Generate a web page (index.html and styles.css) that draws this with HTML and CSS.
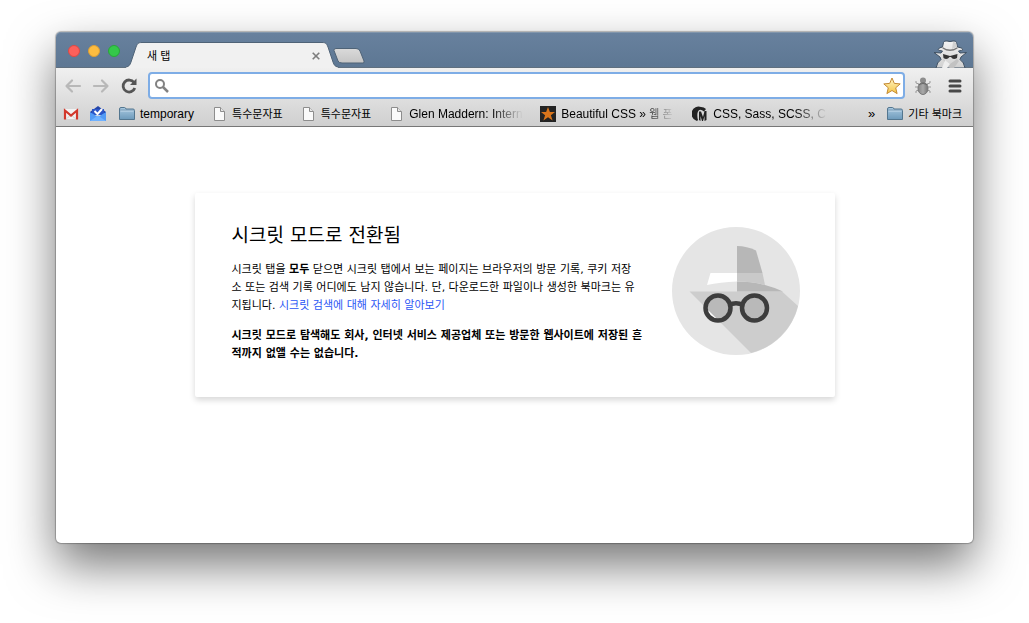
FILE: index.html
```html
<!DOCTYPE html>
<html lang="ko">
<head>
<meta charset="utf-8">
<title>새 탭</title>
<link rel="stylesheet" href="styles.css">
</head>
<body>
<svg class="defs" aria-hidden="true">
  <defs>
    <linearGradient id="folderFill" x1="0" y1="0" x2="0" y2="1"><stop offset="0" stop-color="#a9c9e0"/><stop offset="1" stop-color="#6d9abb"/></linearGradient>
    <linearGradient id="starFill" x1="0" y1="0" x2="0" y2="1"><stop offset="0" stop-color="#fff6c8"/><stop offset="1" stop-color="#f6c544"/></linearGradient>
    <linearGradient id="spyFill" x1="0" y1="0" x2="0" y2="1"><stop offset="0" stop-color="#f2f2f2"/><stop offset="1" stop-color="#d0d0d0"/></linearGradient>
    <linearGradient id="bugFill" x1="0" y1="0" x2="1" y2="0"><stop offset="0" stop-color="#858585"/><stop offset=".5" stop-color="#a9a9a9"/><stop offset="1" stop-color="#747474"/></linearGradient>
    <linearGradient id="newTabFill" x1="0" y1="0" x2="0" y2="1"><stop offset="0" stop-color="#dadada"/><stop offset="1" stop-color="#c5c5c5"/></linearGradient>
    <symbol id="folder" viewBox="0 0 16 16">
      <path d="M.5 13.500V3Q.5 1.500 2 1.500H5.500Q6.500 1.500 7 3H14Q15.500 3 15.500 4.500V13.500Z" fill="url(#folderFill)" stroke="#53768f"/>
      <path d="M1.500 5H14.500" stroke="#c6dcec"/><path d="M1 4H15" stroke="#6487a0" stroke-opacity=".6"/>
    </symbol>
    <symbol id="file" viewBox="0 0 16 16">
      <path d="M3.500 1.500H9.500L13.500 5.500V14.500H3.500Z" fill="#fafafa" stroke="#8d8d8d"/>
      <path d="M9.500 1.500V5.500H13.500" fill="#e6e6e6" stroke="#8d8d8d"/>
    </symbol>
  </defs>
</svg>

<div class="window">
  <header class="titlebar">
    <div class="lights">
      <button class="light light-close" aria-label="닫기"></button>
      <button class="light light-min" aria-label="최소화"></button>
      <button class="light light-max" aria-label="확대"></button>
    </div>
    <div class="tab">
      <svg class="slope" viewBox="0 0 16 26"><path d="M0 26V25C3 24.500 4 23 5 20L10 5C11.500 1.500 12 .5 16 .5V26Z" fill="#f1f1f1"/><path d="M0 25C3 24.500 4 23 5 20L10 5C11.500 1.500 12 .5 16 .5" fill="none" stroke="#4f6377"/></svg>
      <div class="tab-body">
        <span class="tab-title">새 탭</span>
        <button class="tab-close" aria-label="탭 닫기"><svg viewBox="0 0 8 8" width="8" height="8"><path d="M.7 .7L7.300 7.300M7.300 .7L.7 7.300" stroke="#7d7d7d" stroke-width="1.600"/></svg></button>
      </div>
      <svg class="slope" viewBox="0 0 16 26"><path d="M16 26V25C13 24.500 12 23 11 20L6 5C4.500 1.500 4 .5 0 .5V26Z" fill="#f1f1f1"/><path d="M16 25C13 24.500 12 23 11 20L6 5C4.500 1.500 4 .5 0 .5" fill="none" stroke="#4f6377"/></svg>
    </div>
    <button class="new-tab" aria-label="새 탭 열기"><svg viewBox="0 0 32 16" width="32" height="16"><path d="M3 .5H23Q26 .5 27 3L31 13Q31.500 15 30 15H9Q6 15 5 13L1 2.500Q.5 .5 3 .5Z" fill="url(#newTabFill)" stroke="#4f6377"/></svg></button>
    <svg class="spy" viewBox="0 0 34 30" width="34" height="30" role="img" aria-label="시크릿 모드">
      <path d="M3 30Q4 24 8 21.500L7 19L1 14.500L8 15L9.500 13Q5 12.500 5 11.500Q6 9.500 9.500 9L10.500 4.500Q11 2.500 14 3Q17 4 20 3Q23 2.500 23.500 4.500L24.500 9Q29 9.500 30 11.500Q29.500 12.500 25.500 13L27 15L33.500 14.500L28 19L27 21.500Q31 24 32 30Z" fill="url(#spyFill)" stroke="#3f5062"/>
      <path d="M9.500 9Q17 14 24.500 9V10.500Q17 15.500 9.500 10.500Z" fill="#777"/>
      <path d="M20 4L23 4.500L24 9L19 11Z" fill="#d0d0d0"/>
      <path d="M10 16L17 18L24.500 16L24 20Q20 22.500 18 19H16.500Q14 22.500 10.500 20Z" fill="#353535"/>
      <path d="M10 21L17 26L24 21L26 23L21 30H17L12 26Z" fill="#c2c2c2"/>
      <path d="M12 22L17 26L14 30H9Z" fill="#eee"/>
    </svg>
  </header>

  <div class="chrome">
    <form class="toolbar">
      <button type="button" class="tool" aria-label="뒤로"><svg viewBox="0 0 18 18" width="18" height="18"><path d="M16 9H3M8 3.500L2.500 9L8 14.500" fill="none" stroke="#b8b8b8" stroke-width="2.200" stroke-linecap="round" stroke-linejoin="round"/></svg></button>
      <button type="button" class="tool" aria-label="앞으로"><svg viewBox="0 0 18 18" width="18" height="18"><path d="M2 9H15M10 3.500L15.500 9L10 14.500" fill="none" stroke="#b8b8b8" stroke-width="2.200" stroke-linecap="round" stroke-linejoin="round"/></svg></button>
      <button type="button" class="tool" aria-label="새로고침"><svg viewBox="0 0 18 18" width="18" height="18"><path d="M14 5.500A6 6 0 1 0 14.800 11" fill="none" stroke="#555" stroke-width="2.800"/><path d="M16.500 1.500V8H10Z" fill="#555"/></svg></button>
      <div class="omnibox">
        <svg viewBox="0 0 16 16" width="16" height="16"><circle cx="6" cy="6" r="4" fill="none" stroke="#828282" stroke-width="2"/><path d="M9 9L14 14" stroke="#828282" stroke-width="2.500"/></svg>
        <input type="text" class="address" aria-label="주소창">
        <button type="button" class="star" aria-label="북마크에 추가"><svg viewBox="0 0 18 18" width="18" height="18"><path d="M9 1L11.300 6.400L17.200 6.900L12.700 10.800L14.100 16.600L9 13.500L3.900 16.600L5.300 10.800L.8 6.900L6.700 6.400Z" fill="url(#starFill)" stroke="#c48a34" stroke-linejoin="round"/></svg></button>
      </div>
      <button type="button" class="tool tool-right" aria-label="확장 프로그램"><svg viewBox="0 0 18 18" width="18" height="18"><path d="M5 7L2 6V4M13 7L16 6V4M5 10H1M13 10H17M5 13L2 14V16M13 13L16 14V16" fill="none" stroke="#999"/><circle cx="9" cy="3.500" r="3" fill="#8d8d8d"/><ellipse cx="9" cy="11.500" rx="5" ry="6" fill="url(#bugFill)" stroke="#777"/><path d="M4.500 7.500Q9 5.500 13.500 7.500" fill="none" stroke="#666"/></svg></button>
      <button type="button" class="tool tool-right" aria-label="메뉴"><svg viewBox="0 0 14 14" width="14" height="14"><path d="M2 2H12M2 7H12M2 12H12" stroke="#484848" stroke-width="3" stroke-linecap="round"/></svg></button>
    </form>

    <nav class="bookmarks" aria-label="북마크">
      <div class="pinned">
        <a href="#" aria-label="Gmail"><svg class="icon" viewBox="0 0 16 16"><path d="M1 3H15V13H1Z" fill="#f2f2f2"/><path d="M4 12.500L8 8.500L12 12.500" fill="none" stroke="#ccc"/><path d="M2 13.500V4.500L8 9.500L14 4.500V13.500" fill="none" stroke="#d2382c" stroke-width="2.200"/></svg></a>
        <a href="#" aria-label="Inbox"><svg class="icon" viewBox="0 0 16 16"><path d="M0 6L8 0L16 6V8H0Z" fill="#2444a8"/><path d="M2 3H14V9H2Z" fill="#2b55c7"/><path d="M0 6L8 11L16 6V15H0Z" fill="#539bf5"/><path d="M0 15L8 9.500L16 15Z" fill="#70b2ff"/><path d="M4.500 5L7.500 8L12 3" fill="none" stroke="#fff" stroke-width="2"/></svg></a>
      </div>
      <a class="bookmark" href="#"><svg class="icon"><use href="#folder"/></svg><span class="latin">temporary</span></a>
      <a class="bookmark" href="#"><svg class="icon"><use href="#file"/></svg><span>특수문자표</span></a>
      <a class="bookmark" href="#"><svg class="icon"><use href="#file"/></svg><span>특수문자표</span></a>
      <a class="bookmark" href="#"><svg class="icon"><use href="#file"/></svg><span class="latin faded">Glen Maddern: Intern</span></a>
      <a class="bookmark" href="#"><svg class="icon" viewBox="0 0 16 16"><path d="M0 0H16V16H0Z" fill="#242424"/><path d="M8 1L9.900 6H15L10.900 9.200L12.600 14.500L8 11.300L3.400 14.500L5.100 9.200L1 6H6.100Z" fill="#d9751c"/></svg><span class="latin faded">Beautiful CSS » <span class="hangul">웹 폰</span></span></a>
      <a class="bookmark" href="#"><svg class="icon" viewBox="0 0 16 16"><path d="M4 14.500A7.200 7.200 0 0 1 9 1Q12 1 14 3L12 5.500Q7 1.500 5.500 7Q5 11 6 14L5 15Z" fill="#222"/><path d="M7 14V5.500H9L11 11L12.500 5H14.500V14L12.500 15V10L11 15H10L8.500 10V15Z" fill="#222"/></svg><span class="latin faded">CSS, Sass, SCSS, C</span></a>
      <button class="more" aria-label="북마크 더보기">»</button>
      <a class="bookmark" href="#"><svg class="icon"><use href="#folder"/></svg><span>기타 북마크</span></a>
    </nav>
  </div>

  <main class="page">
    <section class="card">
      <div class="copy">
        <h1>시크릿 모드로 전환됨</h1>
        <p>시크릿 탭을 <strong>모두</strong> 닫으면 시크릿 탭에서 보는 페이지는 브라우저의 방문 기록, 쿠키 저장<br>소 또는 검색 기록 어디에도 남지 않습니다. 단, 다운로드한 파일이나 생성한 북마크는 유<br>지됩니다. <a href="#">시크릿 검색에 대해 자세히 알아보기</a></p>
        <p><strong>시크릿 모드로 탐색해도 회사, 인터넷 서비스 제공업체 또는 방문한 웹사이트에 저장된 흔<br>적까지 없앨 수는 없습니다.</strong></p>
      </div>
      <svg class="illustration" viewBox="0 0 128 128" role="img" aria-label="시크릿 모드">
        <circle cx="64" cy="64" r="64" fill="#e5e5e5"/>
        <path d="M17.500 64.500H110L126 79A64 64 0 0 1 79 126Z" fill="#cdcdcd"/>
        <path d="M38.500 46H65V54.500Q48 55 35 58Z" fill="#fff"/>
        <path d="M65 19Q75 19 84 23.500L90.500 46H65Z" fill="#b7b7b7"/>
        <path d="M65 54.500Q80 54.500 93 58Q101 60 111 64.500H65Z" fill="#b7b7b7"/>
        <path d="M65 46H90.500L93 58Q80 54.500 65 54.500Z" fill="#c9c9c9"/>
        <circle cx="46" cy="81" r="12" fill="#b9b9b9"/><circle cx="82.500" cy="81" r="12" fill="#b9b9b9"/>
        <path d="M34 81L46 93Q34 93 34 81Z" fill="#fff"/>
        <g fill="none" stroke="#3d3d3d" stroke-width="4.500"><circle cx="46" cy="81" r="12.500"/><circle cx="82.500" cy="81" r="12.500"/><path d="M57 78Q64 74.500 71 78"/></g>
      </svg>
    </section>
  </main>
</div>
</body>
</html>
```
FILE: styles.css
```css
* { box-sizing: border-box; }

body {
  margin: 0;
  min-height: 100vh;
  padding: 32px 56px 80px;
  display: flex;
  background: #fff;
  color: #000;
  font: 11px/18px "Liberation Sans", "Noto Sans CJK KR", sans-serif;
}

button {
  border: 0;
  padding: 0;
  background: none;
  color: inherit;
  font: inherit;
}

a { color: inherit; text-decoration: none; }
svg { display: block; flex: none; }
.defs { position: absolute; width: 0; height: 0; }

.window {
  flex: 1;
  min-width: 0;
  display: flex;
  flex-direction: column;
  background: #fff;
  border-radius: 5px;
  box-shadow: 0 0 1px 1px rgba(0, 0, 0, .25), 0 22px 48px rgba(0, 0, 0, .54);
}

.titlebar {
  height: 36px;
  display: flex;
  align-items: flex-end;
  padding: 0 6px 0 12px;
  border-radius: 5px 5px 0 0;
  background: linear-gradient(#68819e, #5d7793);
  box-shadow: inset 0 1px #8296ac, inset 0 -1px #60707f;
}

.lights {
  display: flex;
  gap: 8px;
  margin-right: 6px;
  padding-bottom: 11px;
}

.light { width: 12px; height: 12px; border-radius: 50%; }
.light-close { background: #fc605b; border: 1px solid #df4843; }
.light-min { background: #fdbc40; border: 1px solid #de9f34; }
.light-max { background: #34c84a; border: 1px solid #29a739; }

.tab { display: flex; width: 212px; height: 26px; }
.slope { width: 16px; height: 26px; }

.tab-body {
  flex: 1;
  display: flex;
  align-items: center;
  justify-content: space-between;
  padding: 0 0 0 5px;
  border-top: 1px solid #4f6377;
  background: #f1f1f1;
}

.tab-close { width: 12px; height: 12px; display: grid; place-items: center; }
.new-tab { margin: 0 auto 4px -5px; }

.chrome {
  background: linear-gradient(#f0f0f0, #cfcfcf);
  border-bottom: 1px solid #777;
}

.toolbar {
  display: flex;
  align-items: center;
  padding: 4px 2px 2px 3px;
}

.tool { width: 28px; height: 27px; display: grid; place-items: center; }
.tool-right { width: 32px; }

.omnibox {
  flex: 1;
  min-width: 0;
  height: 27px;
  margin: 0 2px 0 5px;
  padding: 0 2px 0 4px;
  display: flex;
  align-items: center;
  background: #fff;
  border: 2px solid #7eade6;
  border-radius: 4px;
}

.address {
  flex: 1;
  min-width: 0;
  border: 0;
  outline: 0;
  background: none;
  font: inherit;
}

.bookmarks {
  display: flex;
  align-items: center;
  gap: 17px;
  height: 25px;
  padding: 0 11px 0 7px;
  white-space: nowrap;
}

.pinned { display: flex; gap: 11px; margin-right: -4px; }
.icon { width: 16px; height: 16px; }
.bookmark { display: flex; align-items: center; gap: 5px; }
.latin { font-size: 12px; }
.hangul { font-size: 11px; }

.faded {
  width: 114px;
  -webkit-mask-image: linear-gradient(to right, #000 72%, transparent);
  mask-image: linear-gradient(to right, #000 72%, transparent);
}

.more { margin: 0 -5px 0 auto; font-size: 13px; }

.page {
  flex: 1;
  padding: 66px 24px 24px;
}

.card {
  max-width: 640px;
  margin: 0 auto;
  padding: 26px 35px 34px 37px;
  display: flex;
  align-items: center;
  gap: 24px;
  background: #fff;
  border-radius: 2px;
  box-shadow: 0 3px 6px rgba(0, 0, 0, .16);
}

.copy {
  flex: 1;
  min-width: 0;
  padding-top: 2px;
  font-family: "DejaVu Sans", "Noto Sans CJK KR", sans-serif;
}

h1 {
  margin: 0;
  font-size: 19px;
  font-weight: 400;
  line-height: 28px;
}

p { margin: 12px 0 0; }
p a { color: #2a56f5; }
.illustration { width: 128px; height: 128px; }
```
